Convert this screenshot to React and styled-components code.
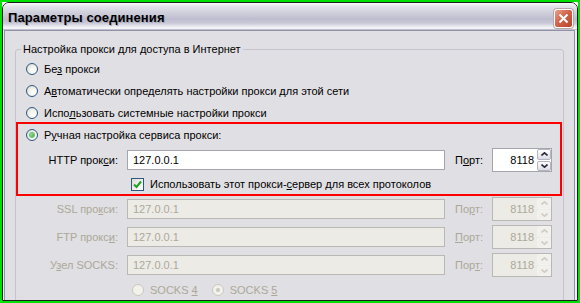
import styled, { createGlobalStyle } from 'styled-components';

const GlobalStyle = createGlobalStyle`
  html, body {
    margin: 0;
    padding: 0;
    background: #ffffff;
  }
  body {
    font-family: "Liberation Sans", Arial, sans-serif;
    font-size: 11px;
    color: #000;
  }
`;

const DISABLED = '#aca899';

const Frame = styled.div`
  width: 580px;
  height: 303px;
  box-sizing: border-box;
  border: 2px solid #00e000;
  display: flex;
`;

const Window = styled.div`
  flex: 1;
  display: flex;
  flex-direction: column;
  border: 1px solid #1c1c1c;
  border-radius: 7px 7px 0 0;
  background: #eeeef3;
  overflow: hidden;
`;

const TitleBar = styled.div`
  height: 27px;
  flex: none;
  display: flex;
  align-items: center;
  justify-content: space-between;
  padding: 0 4px 0 5px;
  background: linear-gradient(
    #fbfbfd 0%,
    #e4e4ec 12%,
    #d0d0dc 35%,
    #bdbdcf 60%,
    #cacad8 75%,
    #ececf2 88%,
    #fafafc 94%,
    #a4a4b8 100%
  );
`;

const Title = styled.span`
  font-weight: bold;
  font-size: 13px;
  letter-spacing: 0.1px;
  color: #000;
  text-shadow: 1px 1px 0 #a8a8b8;
  padding-top: 1px;
`;

const CloseButton = styled.div`
  width: 19px;
  height: 19px;
  margin-top: 3px;
  box-sizing: border-box;
  border: 1px solid #fff;
  border-radius: 3px;
  background: linear-gradient(135deg, #eaa28e 0%, #d2634a 45%, #b8432c 100%);
  box-shadow: 0 0 0 1px #b8a8a8;
  display: flex;
  align-items: center;
  justify-content: center;
`;

const Body = styled.div`
  flex: 1;
  margin: 0 2px 0 1px;
  border: 1px solid #9292a8;
  border-bottom: none;
  background: #e0dfe3;
  padding: 11px 10px 0 10px;
  overflow: hidden;
`;

const GroupBox = styled.fieldset`
  margin: 0;
  padding: 2px 0 0 0;
  min-width: 0;
  border: 1px solid #c6c3cc;
  border-radius: 3px;
`;

const Legend = styled.legend`
  margin-left: 5px;
  padding: 0 2px;
  line-height: 14px;
`;

const RadioRow = styled.div`
  display: flex;
  align-items: center;
  height: ${(p) => p.$height || 22}px;
  padding-left: ${(p) => p.$indent}px;
  gap: 6px;
  color: ${(p) => (p.$disabled ? DISABLED : '#000')};
`;

const RadioCircle = styled.span`
  width: 12px;
  height: 12px;
  flex: none;
  box-sizing: border-box;
  border-radius: 50%;
  border: 1px solid ${(p) => (p.$disabled ? '#cac8bb' : '#2c5781')};
  background: ${(p) =>
    p.$disabled
      ? '#f2f1ec'
      : 'radial-gradient(circle at 65% 65%, #ffffff 0%, #f4f4f0 40%, #d6d6ce 100%)'};
  display: flex;
  align-items: center;
  justify-content: center;
  &::after {
    content: '';
    display: ${(p) => (p.$checked ? 'block' : 'none')};
    width: 4px;
    height: 4px;
    border-radius: 50%;
    background: ${(p) => (p.$disabled ? '#cac8bb' : 'radial-gradient(circle at 35% 35%, #8fe08f, #21a121)')};
    box-shadow: ${(p) => (p.$disabled ? 'none' : '0 0 0 1px #6cc26c')};
  }
`;

const Gap = styled.span`
  width: ${(p) => p.$w}px;
  flex: none;
`;

const Highlight = styled.div`
  border: 2px solid #ff0000;
  margin: -2px 1px -1px 0;
`;

const ProxyRow = styled.div`
  display: grid;
  grid-template-columns: ${(p) => p.$labelWidth}px 318px 29px 60px;
  column-gap: 9px;
  align-items: center;
  height: 28px;
  color: ${(p) => (p.$disabled ? DISABLED : '#000')};
`;

const FieldLabel = styled.span`
  text-align: right;
  white-space: nowrap;
`;

const PortLabel = styled.span`
  margin-left: 1px;
  white-space: nowrap;
`;

const TextBox = styled.div`
  height: 20px;
  box-sizing: border-box;
  border: 1px solid ${(p) => (p.$disabled ? '#b9b8b4' : '#a3a6ab')};
  background: ${(p) => (p.$disabled ? '#ecebe6' : '#ffffff')};
  padding-left: 5px;
  display: flex;
  align-items: center;
`;

const PortBox = styled.div`
  height: 24px;
  box-sizing: border-box;
  border: 1px solid ${(p) => (p.$disabled ? '#b9b8b4' : '#a3a6ab')};
  background: ${(p) => (p.$disabled ? '#ecebe6' : '#ffffff')};
  display: flex;
  align-items: stretch;
`;

const PortValue = styled.span`
  flex: 1;
  padding-right: 3px;
  display: flex;
  align-items: center;
  justify-content: flex-end;
`;

const Spinner = styled.div`
  width: 14px;
  display: flex;
  flex-direction: column;
  gap: 1px;
`;

const SpinButton = styled.div`
  flex: 1;
  box-sizing: border-box;
  border: 1px solid ${(p) => (p.$disabled ? '#f4f3ef' : '#b4b4c4')};
  border-radius: 2px;
  background: ${(p) =>
    p.$disabled ? '#f1f0ec' : 'linear-gradient(#ffffff, #dcdce4)'};
  display: flex;
  align-items: center;
  justify-content: center;
`;

const CheckRow = styled.div`
  display: flex;
  align-items: center;
  height: 20px;
  padding-left: 113px;
  gap: 6px;
`;

const CheckBox = styled.span`
  width: 13px;
  height: 13px;
  box-sizing: border-box;
  border: 1px solid #2c5781;
  background: linear-gradient(135deg, #dcdcd6, #ffffff);
  display: flex;
  align-items: center;
  justify-content: center;
`;

const Arrow = ({ down, disabled }) => (
  <svg width="7" height="4" viewBox="0 0 7 4">
    <polyline
      points={down ? '0.5,0.5 3.5,3.2 6.5,0.5' : '0.5,3.5 3.5,0.8 6.5,3.5'}
      fill="none"
      stroke={disabled ? '#cfcdc4' : '#2a2a3a'}
      strokeWidth="1.6"
    />
  </svg>
);

const Radio = ({ checked, disabled, indent, height, children }) => (
  <RadioRow $indent={indent} $height={height} $disabled={disabled}>
    <RadioCircle $checked={checked} $disabled={disabled} />
    <span>{children}</span>
  </RadioRow>
);

const Proxy = ({ label, portLabel, disabled, labelWidth }) => (
  <ProxyRow $labelWidth={labelWidth} $disabled={disabled}>
    <FieldLabel>{label}</FieldLabel>
    <TextBox $disabled={disabled}>127.0.0.1</TextBox>
    <PortLabel>{portLabel}</PortLabel>
    <PortBox $disabled={disabled}>
      <PortValue>8118</PortValue>
      <Spinner>
        <SpinButton $disabled={disabled}>
          <Arrow disabled={disabled} />
        </SpinButton>
        <SpinButton $disabled={disabled}>
          <Arrow down disabled={disabled} />
        </SpinButton>
      </Spinner>
    </PortBox>
  </ProxyRow>
);

export default function App() {
  return (
    <>
      <GlobalStyle />
      <Frame>
        <Window>
          <TitleBar>
            <Title>Параметры соединения</Title>
            <CloseButton>
              <svg width="11" height="11" viewBox="0 0 11 11">
                <path d="M1.5 1.5 L9.5 9.5 M9.5 1.5 L1.5 9.5" stroke="#fff" strokeWidth="2" />
              </svg>
            </CloseButton>
          </TitleBar>
          <Body>
            <GroupBox>
              <Legend>Настройка прокси для доступа в Интернет</Legend>
              <Radio indent={10}>
                Бе<u>з</u> прокси
              </Radio>
              <Radio indent={10}>
                А<u>в</u>томатически определять настройки прокси для этой сети
              </Radio>
              <Radio indent={10}>
                Испо<u>л</u>ьзовать системные настройки прокси
              </Radio>
              <Highlight>
                <Radio indent={8} checked>
                  Р<u>у</u>чная настройка сервиса прокси:
                </Radio>
                <Proxy
                  labelWidth={100}
                  label={<>HTTP прок<u>с</u>и:</>}
                  portLabel={<>П<u>о</u>рт:</>}
                />
                <CheckRow>
                  <CheckBox>
                    <svg width="9" height="9" viewBox="0 0 9 9">
                      <polyline points="1,4.5 3.5,7 8,1.5" fill="none" stroke="#21a121" strokeWidth="2" />
                    </svg>
                  </CheckBox>
                  <span>
                    Использовать этот прокси-<u>с</u>ервер для всех протоколов
                  </span>
                </CheckRow>
              </Highlight>
              <Proxy
                disabled
                labelWidth={102}
                label={<>SSL про<u>к</u>си:</>}
                portLabel={<>По<u>р</u>т:</>}
              />
              <Proxy
                disabled
                labelWidth={102}
                label={<>FTP прокс<u>и</u>:</>}
                portLabel={<><u>П</u>орт:</>}
              />
              <Proxy
                disabled
                labelWidth={102}
                label={<>У<u>з</u>ел SOCKS:</>}
                portLabel={<>Пор<u>т</u>:</>}
              />
              <RadioRow $indent={116} $disabled>
                <RadioCircle $disabled />
                <span>
                  SOCKS <u>4</u>
                </span>
                <Gap $w={2} />
                <RadioCircle $disabled $checked />
                <span>
                  SOCKS <u>5</u>
                </span>
              </RadioRow>
            </GroupBox>
          </Body>
        </Window>
      </Frame>
    </>
  );
}
